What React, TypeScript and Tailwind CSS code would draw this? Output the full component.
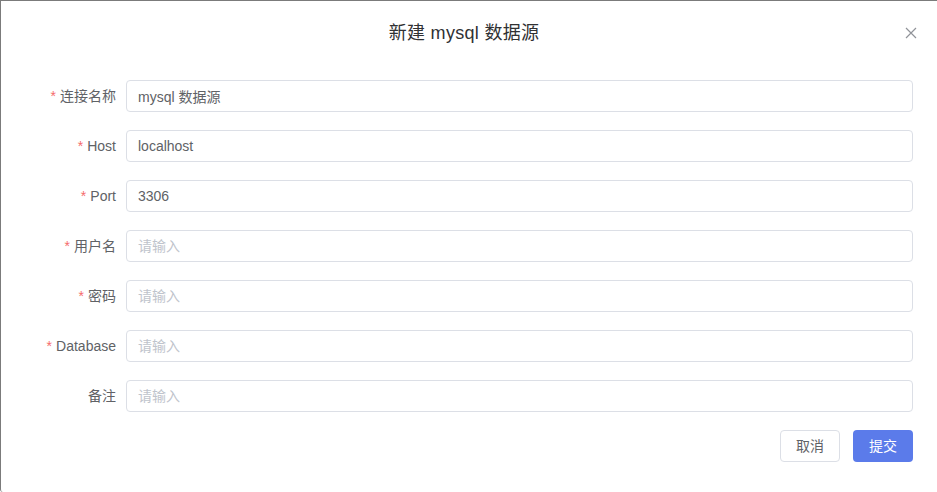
const fields = [
    { label: "连接名称", value: "mysql 数据源", required: true },
    { label: "Host", value: "localhost", required: true },
    { label: "Port", value: "3306", required: true },
    { label: "用户名", value: "", required: true },
    { label: "密码", value: "", required: true },
    { label: "Database", value: "", required: true },
    { label: "备注", value: "", required: false },
];

export default function App() {
    return (
        <div
            className="relative w-[937px] h-[492px] bg-white border-t border-l border-[#7b7b7b] rounded-bl-[3px] text-[#606266]"
            style={{ fontFamily: '"Liberation Sans", "Noto Sans CJK SC", sans-serif' }}
        >
            {/* header */}
            <div className="h-[65px] pr-[10px] flex items-center justify-center">
                <span className="text-[18px] text-[#303133] tracking-[0.3px]">新建 mysql 数据源</span>
            </div>
            <button className="absolute top-[26px] right-[20px] w-[12px] h-[12px] text-[#909399]">
                <svg viewBox="0 0 12 12" width="12" height="12" fill="none" stroke="currentColor" strokeWidth="1.2">
                    <path d="M1 1L11 11M11 1L1 11" />
                </svg>
            </button>

            {/* form */}
            <div className="mt-[14px] pr-[24px] flex flex-col gap-[18px]">
                {fields.map((f) => (
                    <div key={f.label} className="flex items-center h-[32px]">
                        <label className="w-[115px] text-right text-[14px]">
                            {f.required && <span className="text-[#f56c6c] mr-[4px]">*</span>}
                            {f.label}
                        </label>
                        <input
                            readOnly
                            value={f.value}
                            placeholder="请输入"
                            className="ml-[10px] flex-1 h-[32px] border border-[#dcdfe6] rounded-[4px] px-[11px] text-[14px] text-[#606266] placeholder:text-[#c0c4cc] outline-none"
                        />
                    </div>
                ))}
                <div className="flex justify-end gap-[13px]">
                    <button className="w-[60px] h-[32px] border border-[#dcdfe6] rounded-[4px] text-[14px] text-[#606266] bg-white">取消</button>
                    <button className="w-[60px] h-[32px] rounded-[4px] text-[14px] text-white bg-[#5b7bea]">提交</button>
                </div>
            </div>
        </div>
    );
}
